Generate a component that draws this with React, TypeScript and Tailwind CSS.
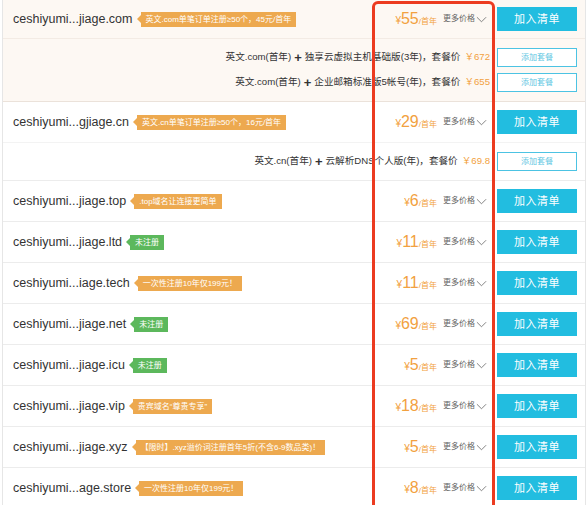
import { Fragment } from "react"

type Combo = { base: string; extra: string; price: string }

const domains: {
  name: string
  tag: string
  green?: boolean
  price: string
  combos?: Combo[]
}[] = [
  {
    name: "ceshiyumi...jiage.com",
    tag: "英文.com单笔订单注册≥50个，45元/首年",
    price: "55",
    combos: [
      { base: "英文.com(首年)", extra: "独享云虚拟主机基础版(3年)，套餐价", price: "￥672" },
      { base: "英文.com(首年)", extra: "企业邮箱标准版5帐号(年)，套餐价", price: "￥655" },
    ],
  },
  {
    name: "ceshiyumi...gjiage.cn",
    tag: "英文.cn单笔订单注册≥50个，16元/首年",
    price: "29",
    combos: [{ base: "英文.cn(首年)", extra: "云解析DNS个人版(年)，套餐价", price: "￥69.8" }],
  },
  { name: "ceshiyumi...jiage.top", tag: ".top域名让连接更简单", price: "6" },
  { name: "ceshiyumi...jiage.ltd", tag: "未注册", green: true, price: "11" },
  { name: "ceshiyumi...iage.tech", tag: "一次性注册10年仅199元！", price: "11" },
  { name: "ceshiyumi...jiage.net", tag: "未注册", green: true, price: "69" },
  { name: "ceshiyumi...jiage.icu", tag: "未注册", green: true, price: "5" },
  { name: "ceshiyumi...jiage.vip", tag: "贵宾域名“尊贵专享”", price: "18" },
  { name: "ceshiyumi...jiage.xyz", tag: "【限时】.xyz溢价词注册首年5折(不含6-9数品类)！", price: "5" },
  { name: "ceshiyumi...age.store", tag: "一次性注册10年仅199元！", price: "8" },
]

function Tag({ text, green }: { text: string; green?: boolean }) {
  return (
    <span className="relative ml-[8px] flex items-center">
      <span
        className={`absolute left-[-4px] top-1/2 -translate-y-1/2 w-0 h-0 border-y-[4px] border-y-transparent border-r-[4px] ${
          green ? "border-r-[#5cb85c]" : "border-r-[#eda94f]"
        }`}
      />
      <span
        className={`h-[15px] leading-[15px] px-[5px] text-[8px] text-white whitespace-nowrap ${
          green ? "bg-[#5cb85c]" : "bg-[#eda94f]"
        }`}
      >
        {text}
      </span>
    </span>
  )
}

export default function App() {
  return (
    <div
      className="relative w-[588px] h-[505px] overflow-hidden bg-white text-[#333]"
      style={{ fontFamily: '"Liberation Sans", "Noto Sans CJK SC", sans-serif' }}
    >
      <div className="ml-[2px] w-[584px] border-x border-[#e6e6e6]">
        {domains.map((d, i) => (
          <div
            key={d.name}
            className={
              i === 0
                ? "bg-[#fdf8f3] border-b border-[#ebe2da]"
                : "bg-white border-b border-[#ececec]"
            }
          >
            {/* main line */}
            <div className={`flex items-center pl-[10px] pr-[8px] ${i === 0 ? "h-[38px]" : "h-10"}`}>
              <div className="flex-1 flex items-center min-w-0">
                <span className="text-[12.5px] whitespace-nowrap">{d.name}</span>
                <Tag text={d.tag} green={d.green} />
              </div>
              <div className="flex items-baseline text-[#f2a140] whitespace-nowrap">
                <span className="text-[10px]">¥</span>
                <span className="text-[16px] leading-none">{d.price}</span>
                <span className="text-[8px]">/首年</span>
              </div>
              <div className="ml-[6px] w-[44px] flex items-center text-[8px] text-[#666] whitespace-nowrap">
                更多价格
                <svg width="12" height="7" viewBox="0 0 12 7" className="ml-[1px]">
                  <polyline points="1,1 6,6 11,1" fill="none" stroke="#777" strokeWidth="1" />
                </svg>
              </div>
              <button className="ml-[10px] w-[80px] h-[24px] bg-[#22bde0] text-white text-[11px] tracking-[0.5px]">
                加入清单
              </button>
            </div>

            {/* package lines */}
            {d.combos && (
              <div
                className={`py-[6px] pr-[8px] border-t ${
                  i === 0 ? "border-[#f3ebe4]" : "border-[#f3f3f3]"
                }`}
              >
                {d.combos.map((c) => (
                  <div key={c.extra} className="h-[25px] flex items-center justify-end text-[9.6px]">
                    <span className="whitespace-nowrap flex items-center">
                      <Fragment>{c.base}</Fragment>
                      <span className="font-bold text-[13px] leading-none mx-[3px]">+</span>
                      {c.extra}
                    </span>
                    <span className="ml-[4px] text-[#f2a140] text-[9.6px] whitespace-nowrap">{c.price}</span>
                    <button className="ml-[7px] w-[80px] h-[19px] border border-[#4cc3e3] bg-white text-[#5cc6e2] text-[8px]">
                      添加套餐
                    </button>
                  </div>
                ))}
              </div>
            )}
          </div>
        ))}
      </div>

      {/* red highlight box over the price column */}
      <div className="absolute left-[372px] top-[1px] w-[123px] h-[540px] border-[3.5px] border-[#ec3b20] rounded-[6px] pointer-events-none" />
    </div>
  )
}
